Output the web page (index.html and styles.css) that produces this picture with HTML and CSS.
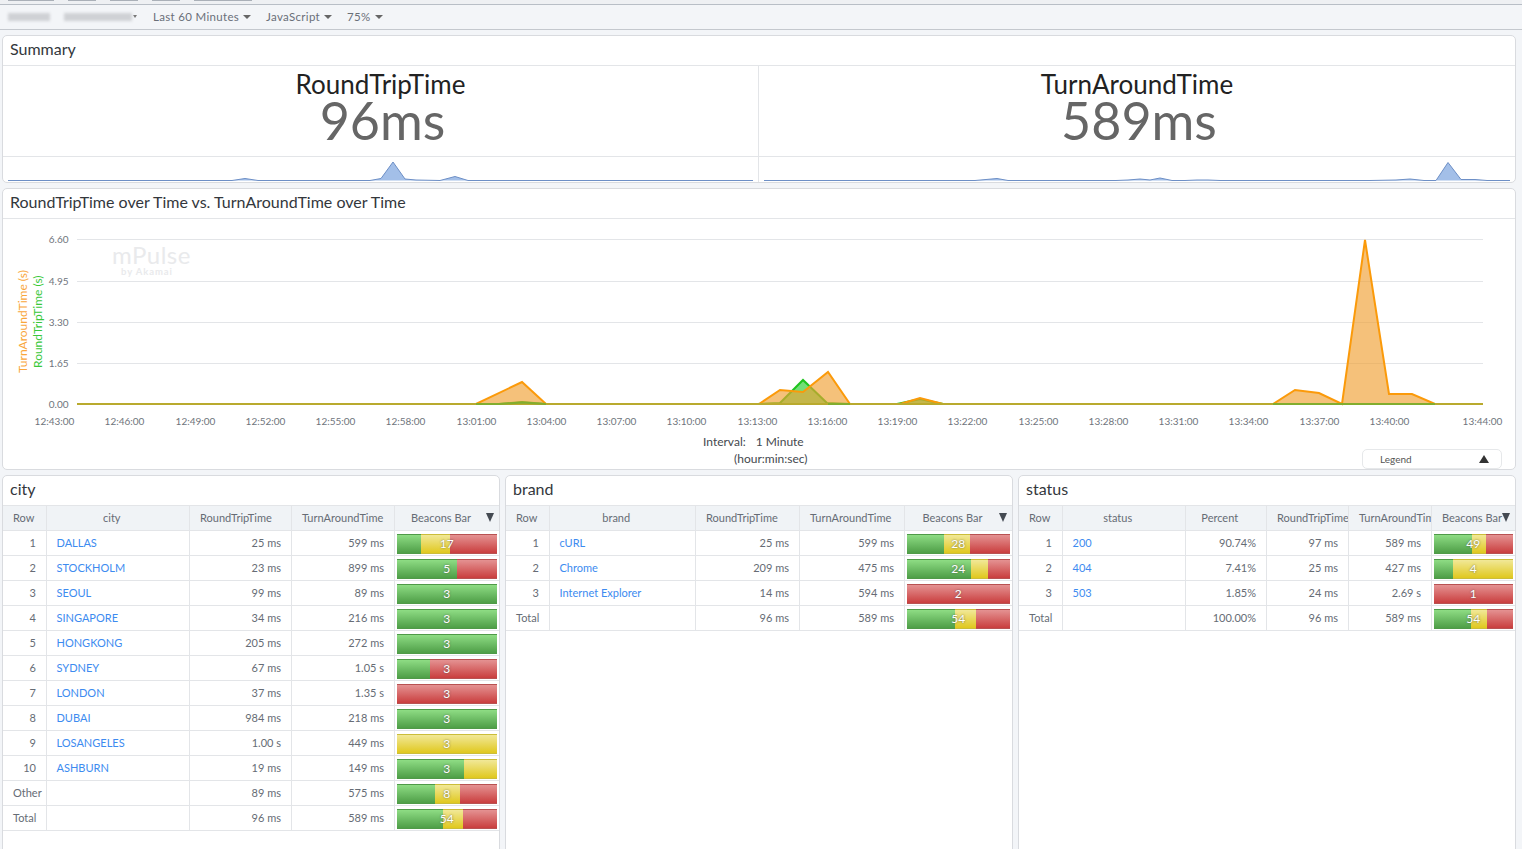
FILE: index.html
```html
<!DOCTYPE html>
<html lang="en">
<head>
    <meta charset="UTF-8">
    <meta name="viewport" content="width=device-width, initial-scale=1.0">
    <title>mPulse Dashboard</title>
    <link rel="stylesheet" href="styles.css">
</head>
<body>
    <div class="topstrip">
        <span class="tab tab-a"></span>
        <span class="tab tab-b"></span>
        <span class="tab tab-c"></span>
        <span class="tab tab-d"></span>
        <span class="tab tab-e"></span>
    </div>
    <div class="toolbar">
        <span class="blurred blurred-a"></span>
        <span class="blurred blurred-b"></span>
        <span class="caret-small"></span>
        <span class="filter filter-time">Last 60 Minutes<i class="caret"></i></span>
        <span class="filter">JavaScript<i class="caret"></i></span>
        <span class="filter">75%<i class="caret"></i></span>
    </div>

    <div class="main">
        <section class="panel summary">
            <h2 class="panel-title">Summary</h2>
            <div class="metrics">
                <div class="metric">
                    <div class="metric-text">
                        <div class="metric-name">RoundTripTime</div>
                        <div class="metric-value">96ms</div>
                    </div>
                    <svg class="spark" viewBox="3 157 755 25" width="755" height="25">
                        <polygon class="spark-fill" points="8,180.500 232,180.500 245,178.500 258,180.500 370,180.500 381,178.500 393,162 405,179 416,180 440,180.500 455,176.500 468,180.500 753,180.500"/>
                        <polyline class="spark-line" points="8,180.500 232,180.500 245,178.500 258,180.500 370,180.500 381,178.500 393,162 405,179 416,180 440,180.500 455,176.500 468,180.500 753,180.500"/>
                    </svg>
                </div>
                <div class="metric metric-right">
                    <div class="metric-text">
                        <div class="metric-name">TurnAroundTime</div>
                        <div class="metric-value">589ms</div>
                    </div>
                    <svg class="spark" viewBox="759 157 756 25" width="756" height="25">
                        <polygon class="spark-fill" points="764,180.500 975,180.500 997,178.500 1008,180.500 1116,180.500 1128,180 1140,179 1150,180 1160,178 1172,180.500 1185,180.500 1197,180 1208,180 1220,180.500 1370,180.500 1396,180 1410,179 1424,180.500 1436,180.500 1448,162.500 1461,179.500 1475,179.500 1487,180.500 1510,180.500"/>
                        <polyline class="spark-line" points="764,180.500 975,180.500 997,178.500 1008,180.500 1116,180.500 1128,180 1140,179 1150,180 1160,178 1172,180.500 1185,180.500 1197,180 1208,180 1220,180.500 1370,180.500 1396,180 1410,179 1424,180.500 1436,180.500 1448,162.500 1461,179.500 1475,179.500 1487,180.500 1510,180.500"/>
                    </svg>
                </div>
            </div>
        </section>

        <section class="panel chart-panel">
            <h2 class="panel-title">RoundTripTime over Time vs. TurnAroundTime over Time</h2>
            <div class="chart-body">
                <svg class="chart" viewBox="3 219 1512 211" width="1512" height="211">
                    <g class="grid">
                        <line x1="77" y1="239.500" x2="1483" y2="239.500"/>
                        <line x1="77" y1="281.500" x2="1483" y2="281.500"/>
                        <line x1="77" y1="322.500" x2="1483" y2="322.500"/>
                        <line x1="77" y1="363.500" x2="1483" y2="363.500"/>
                    </g>
                    <text class="mark-name" x="112" y="264">mPulse</text>
                    <text class="mark-by" x="121" y="275">by Akamai</text>

                    <g class="y-labels">
                        <text x="68.500" y="243">6.60</text>
                        <text x="68.500" y="285">4.95</text>
                        <text x="68.500" y="326">3.30</text>
                        <text x="68.500" y="367">1.65</text>
                        <text x="68.500" y="408">0.00</text>
                    </g>
                    <text class="axis-name axis-tat" transform="translate(27 373) rotate(-90)">TurnAroundTime (s)</text>
                    <text class="axis-name axis-rtt" transform="translate(42 368) rotate(-90)">RoundTripTime (s)</text>

                    <polygon class="area-rtt" points="77,404 499,404 522,402 546,404 757,404 780,403 803,380 827,403 850,404 897,404 920,399 943,404 1483,404"/>
                    <polyline class="line-rtt" points="77,404 499,404 522,402 546,404 757,404 780,403 803,380 827,403 850,404 897,404 920,399 943,404 1483,404"/>
                    <polygon class="area-tat" points="77,404 476,404 522,382 546,404 759,404 780,390 803,392 828,372 850,404 900,404 920,398 943,404 1273,404 1295,390 1319,393 1342,404 1365,240 1389,394 1412,394 1435,404 1483,404"/>
                    <polyline class="line-tat" points="77,404 476,404 522,382 546,404 759,404 780,390 803,392 828,372 850,404 900,404 920,398 943,404 1273,404 1295,390 1319,393 1342,404 1365,240 1389,394 1412,394 1435,404 1483,404"/>
                    <!-- where both series sit on zero the two lines blend -->
                    <line class="baseline" x1="77" y1="404" x2="1483" y2="404"/>
                    <polyline class="base-green" points="476,404 499,404 522,402.500 546,404"/>
                    <line class="base-green" x1="828" y1="404" x2="850" y2="404"/>
                    <line class="base-green" x1="1273" y1="404" x2="1435" y2="404"/>

                    <g class="x-labels">
                        <text x="54.500" y="425">12:43:00</text>
                        <text x="124.500" y="425">12:46:00</text>
                        <text x="195.500" y="425">12:49:00</text>
                        <text x="265.500" y="425">12:52:00</text>
                        <text x="335.500" y="425">12:55:00</text>
                        <text x="405.500" y="425">12:58:00</text>
                        <text x="476.500" y="425">13:01:00</text>
                        <text x="546.500" y="425">13:04:00</text>
                        <text x="616.500" y="425">13:07:00</text>
                        <text x="686.500" y="425">13:10:00</text>
                        <text x="757.500" y="425">13:13:00</text>
                        <text x="827.500" y="425">13:16:00</text>
                        <text x="897.500" y="425">13:19:00</text>
                        <text x="967.500" y="425">13:22:00</text>
                        <text x="1038.500" y="425">13:25:00</text>
                        <text x="1108.500" y="425">13:28:00</text>
                        <text x="1178.500" y="425">13:31:00</text>
                        <text x="1248.500" y="425">13:34:00</text>
                        <text x="1319.500" y="425">13:37:00</text>
                        <text x="1389.500" y="425">13:40:00</text>
                        <text x="1482.500" y="425">13:44:00</text>
                    </g>
                </svg>
                <div class="chart-foot">
                    <div class="interval"><span>Interval:</span><span>1 Minute</span></div>
                    <div class="interval-unit">(hour:min:sec)</div>
                </div>
                <div class="legend-toggle"><span>Legend</span><i class="tri-up"></i></div>
            </div>
        </section>

        <div class="tables">
            <section class="panel">
                <h2 class="panel-title">city</h2>
                <table class="data city-table">
                    <colgroup><col class="c-row"><col class="c-name"><col class="c-a"><col class="c-b"><col class="c-bar"></colgroup>
                    <thead><tr><th>Row</th><th>city</th><th>RoundTripTime</th><th>TurnAroundTime</th><th class="sorted">Beacons Bar<i class="tri-down"></i></th></tr></thead>
                    <tbody>
                        <tr><td class="num">1</td><td><a href="#">DALLAS</a></td><td class="num">25 ms</td><td class="num">599 ms</td><td class="barcell"><div class="bar"><i class="g" style="width:24%"></i><i class="y" style="width:29%"></i><i class="r" style="width:47%"></i><b>17</b></div></td></tr>
                        <tr><td class="num">2</td><td><a href="#">STOCKHOLM</a></td><td class="num">23 ms</td><td class="num">899 ms</td><td class="barcell"><div class="bar"><i class="g" style="width:60%"></i><i class="r" style="width:40%"></i><b>5</b></div></td></tr>
                        <tr><td class="num">3</td><td><a href="#">SEOUL</a></td><td class="num">99 ms</td><td class="num">89 ms</td><td class="barcell"><div class="bar"><i class="g" style="width:100%"></i><b>3</b></div></td></tr>
                        <tr><td class="num">4</td><td><a href="#">SINGAPORE</a></td><td class="num">34 ms</td><td class="num">216 ms</td><td class="barcell"><div class="bar"><i class="g" style="width:100%"></i><b>3</b></div></td></tr>
                        <tr><td class="num">5</td><td><a href="#">HONGKONG</a></td><td class="num">205 ms</td><td class="num">272 ms</td><td class="barcell"><div class="bar"><i class="g" style="width:100%"></i><b>3</b></div></td></tr>
                        <tr><td class="num">6</td><td><a href="#">SYDNEY</a></td><td class="num">67 ms</td><td class="num">1.05 s</td><td class="barcell"><div class="bar"><i class="g" style="width:33%"></i><i class="r" style="width:67%"></i><b>3</b></div></td></tr>
                        <tr><td class="num">7</td><td><a href="#">LONDON</a></td><td class="num">37 ms</td><td class="num">1.35 s</td><td class="barcell"><div class="bar"><i class="r" style="width:100%"></i><b>3</b></div></td></tr>
                        <tr><td class="num">8</td><td><a href="#">DUBAI</a></td><td class="num">984 ms</td><td class="num">218 ms</td><td class="barcell"><div class="bar"><i class="g" style="width:100%"></i><b>3</b></div></td></tr>
                        <tr><td class="num">9</td><td><a href="#">LOSANGELES</a></td><td class="num">1.00 s</td><td class="num">449 ms</td><td class="barcell"><div class="bar"><i class="y" style="width:100%"></i><b>3</b></div></td></tr>
                        <tr><td class="num">10</td><td><a href="#">ASHBURN</a></td><td class="num">19 ms</td><td class="num">149 ms</td><td class="barcell"><div class="bar"><i class="g" style="width:67%"></i><i class="y" style="width:33%"></i><b>3</b></div></td></tr>
                        <tr><td class="num">Other</td><td></td><td class="num">89 ms</td><td class="num">575 ms</td><td class="barcell"><div class="bar"><i class="g" style="width:38%"></i><i class="y" style="width:25%"></i><i class="r" style="width:37%"></i><b>8</b></div></td></tr>
                        <tr><td class="num">Total</td><td></td><td class="num">96 ms</td><td class="num">589 ms</td><td class="barcell"><div class="bar"><i class="g" style="width:46%"></i><i class="y" style="width:20%"></i><i class="r" style="width:34%"></i><b>54</b></div></td></tr>
                    </tbody>
                </table>
            </section>

            <section class="panel">
                <h2 class="panel-title">brand</h2>
                <table class="data brand-table">
                    <colgroup><col class="c-row"><col class="c-name"><col class="c-a"><col class="c-b"><col class="c-bar"></colgroup>
                    <thead><tr><th>Row</th><th>brand</th><th>RoundTripTime</th><th>TurnAroundTime</th><th class="sorted">Beacons Bar<i class="tri-down"></i></th></tr></thead>
                    <tbody>
                        <tr><td class="num">1</td><td><a href="#">cURL</a></td><td class="num">25 ms</td><td class="num">599 ms</td><td class="barcell"><div class="bar"><i class="g" style="width:36%"></i><i class="y" style="width:25%"></i><i class="r" style="width:39%"></i><b>28</b></div></td></tr>
                        <tr><td class="num">2</td><td><a href="#">Chrome</a></td><td class="num">209 ms</td><td class="num">475 ms</td><td class="barcell"><div class="bar"><i class="g" style="width:62%"></i><i class="y" style="width:17%"></i><i class="r" style="width:21%"></i><b>24</b></div></td></tr>
                        <tr><td class="num">3</td><td><a href="#">Internet Explorer</a></td><td class="num">14 ms</td><td class="num">594 ms</td><td class="barcell"><div class="bar"><i class="r" style="width:100%"></i><b>2</b></div></td></tr>
                        <tr><td class="num">Total</td><td></td><td class="num">96 ms</td><td class="num">589 ms</td><td class="barcell"><div class="bar"><i class="g" style="width:47%"></i><i class="y" style="width:20%"></i><i class="r" style="width:33%"></i><b>54</b></div></td></tr>
                    </tbody>
                </table>
            </section>

            <section class="panel">
                <h2 class="panel-title">status</h2>
                <table class="data status-table">
                    <colgroup><col class="c-row"><col class="c-name"><col class="c-pct"><col class="c-a"><col class="c-b"><col class="c-bar"></colgroup>
                    <thead><tr><th>Row</th><th>status</th><th>Percent</th><th>RoundTripTime</th><th>TurnAroundTime</th><th class="sorted">Beacons Bar<i class="tri-down"></i></th></tr></thead>
                    <tbody>
                        <tr><td class="num">1</td><td><a href="#">200</a></td><td class="num">90.74%</td><td class="num">97 ms</td><td class="num">589 ms</td><td class="barcell"><div class="bar"><i class="g" style="width:49%"></i><i class="y" style="width:17%"></i><i class="r" style="width:34%"></i><b>49</b></div></td></tr>
                        <tr><td class="num">2</td><td><a href="#">404</a></td><td class="num">7.41%</td><td class="num">25 ms</td><td class="num">427 ms</td><td class="barcell"><div class="bar"><i class="g" style="width:25%"></i><i class="y" style="width:75%"></i><b>4</b></div></td></tr>
                        <tr><td class="num">3</td><td><a href="#">503</a></td><td class="num">1.85%</td><td class="num">24 ms</td><td class="num">2.69 s</td><td class="barcell"><div class="bar"><i class="r" style="width:100%"></i><b>1</b></div></td></tr>
                        <tr><td class="num">Total</td><td></td><td class="num">100.00%</td><td class="num">96 ms</td><td class="num">589 ms</td><td class="barcell"><div class="bar"><i class="g" style="width:47%"></i><i class="y" style="width:20%"></i><i class="r" style="width:33%"></i><b>54</b></div></td></tr>
                    </tbody>
                </table>
            </section>
        </div>
    </div>
</body>
</html>
```

FILE: styles.css
```css
html, body {
    height: 100%;
}
body {
    display: flex;
    flex-direction: column;
    margin: 0;
    overflow: hidden;
    font-family: Lato, "Open Sans", sans-serif;
    color: #666c75;
    background-color: #f3f5f8;
}

/* top bars */
.topstrip {
    display: flex;
    flex: none;
    height: 4px;
    border-bottom: 1px solid #b8bec6;
    background-color: #eef0f3;
}
.tab {
    height: 1px;
    background-color: #aab0b8;
}
.tab-a { width: 46px; margin-left: 8px; }
.tab-b { width: 28px; margin-left: 14px; }
.tab-c { width: 28px; margin-left: 14px; }
.tab-d { width: 28px; margin-left: 14px; }
.tab-e { width: 58px; margin-left: 14px; }
.toolbar {
    display: flex;
    flex: none;
    align-items: center;
    box-sizing: border-box;
    height: 25px;
    padding-bottom: 1px;
    border-bottom: 1px solid #c4c8ce;
    font-size: 11.5px;
    letter-spacing: 0.32px;
    color: #6a6f78;
}
.blurred {
    height: 8px;
    background-color: #cfd1d5;
    filter: blur(1.5px);
}
.blurred-a { width: 42px; margin-left: 8px; }
.blurred-b { width: 68px; margin-left: 14px; }
.caret-small {
    margin-left: 1px;
    border-top: 3px solid #777;
    border-left: 2px solid transparent;
    border-right: 2px solid transparent;
}
.filter {
    display: flex;
    align-items: center;
    gap: 4px;
    margin-left: 15px;
}
.filter-time { margin-left: 16px; }
.caret {
    border-top: 4px solid #666;
    border-left: 4px solid transparent;
    border-right: 4px solid transparent;
}

/* panels */
.main {
    display: flex;
    flex: 1;
    flex-direction: column;
    gap: 5px;
    min-height: 0;
    padding: 5px 6px 0 2px;
}
.panel {
    border: 1px solid #d9dbdf;
    border-radius: 5px;
    background-color: #fff;
}
.panel-title {
    height: 29px;
    margin: 0;
    padding-left: 7px;
    border-bottom: 1px solid #e3e5e8;
    font-size: 16px;
    font-weight: 400;
    line-height: 25px;
    color: #33373c;
}

/* summary */
.metrics {
    display: grid;
    grid-template-columns: 755px 1fr;
}
.metric-right {
    border-left: 1px solid #e3e5e8;
}
.metric-text {
    height: 90px;
    border-bottom: 1px solid #e3e5e8;
    text-align: center;
    overflow: hidden;
}
.metric-name {
    margin-top: 4px;
    font-size: 26px;
    line-height: 28px;
    color: #222;
}
.metric-value {
    padding-left: 4px;
    font-size: 52px;
    line-height: 44px;
    color: #666;
}
.spark {
    display: block;
}
.spark-fill {
    fill: #a3bfe8;
}
.spark-line {
    fill: none;
    stroke: #6d8fc6;
    stroke-width: 1;
}

/* big chart */
.chart-body {
    position: relative;
    height: 250px;
}
.chart {
    display: block;
}
.grid line {
    stroke: #e3e5e8;
    stroke-width: 1;
}
.y-labels text {
    font-size: 10px;
    text-anchor: end;
    fill: #6f747c;
}
.x-labels text {
    font-size: 10px;
    text-anchor: middle;
    fill: #6f747c;
}
.axis-name {
    font-size: 12px;
}
.axis-tat {
    fill: #f9a63a;
}
.axis-rtt {
    fill: #3ac83a;
}
.mark-name {
    font-size: 24px;
    letter-spacing: 0.5px;
    fill: #e9eaec;
}
.mark-by {
    font-size: 9.500px;
    font-weight: 700;
    letter-spacing: 0.9px;
    fill: #e9eaec;
}
.area-rtt {
    fill: rgba(20, 200, 30, 0.6);
}
.line-rtt {
    fill: none;
    stroke: #1fc41f;
    stroke-width: 2;
}
.area-tat {
    fill: rgba(240, 160, 50, 0.65);
}
.line-tat {
    fill: none;
    stroke: #fb9a0a;
    stroke-width: 2;
}
.baseline {
    stroke: #b9aa2e;
    stroke-width: 2;
}
.base-green {
    fill: none;
    stroke: #82ad2e;
    stroke-width: 2;
}
.chart-foot {
    font-size: 12px;
    color: #44484e;
}
.interval {
    display: flex;
    gap: 10px;
    height: 17px;
    margin-top: 3px;
    padding-left: 700px;
    line-height: 17px;
}
.interval-unit {
    padding-left: 731px;
    line-height: 17px;
}
.legend-toggle {
    position: absolute;
    right: 13px;
    bottom: 0;
    display: flex;
    align-items: center;
    justify-content: space-between;
    box-sizing: border-box;
    width: 140px;
    height: 20px;
    padding: 0 12px 0 17px;
    border: 1px solid #e6e8ea;
    border-radius: 5px;
    font-size: 10px;
    color: #555;
}
.tri-up {
    border-bottom: 8px solid #333;
    border-left: 5px solid transparent;
    border-right: 5px solid transparent;
}

/* tables */
.tables {
    display: grid;
    flex: 1;
    grid-template-columns: 498px 508px 498px;
    gap: 5px;
    min-height: 0;
    margin-bottom: -12px;
}
.data {
    width: 100%;
    table-layout: fixed;
    border-collapse: collapse;
    font-size: 11px;
}
.data th {
    position: relative;
    height: 22px;
    padding: 0 22px 2px 10.5px;
    border: 1px solid #e3e5e8;
    border-top: none;
    font-weight: 400;
    white-space: nowrap;
    overflow: hidden;
    color: #666c75;
    background-color: #f0f3f6;
}
.data td {
    height: 22px;
    padding: 0 10px 2px;
    border: 1px solid #e3e5e8;
    white-space: nowrap;
}
.data th:first-child,
.data td:first-child {
    border-left: none;
}
.data th:first-child {
    padding-left: 10px;
}
.data th:last-child,
.data td:last-child {
    border-right: none;
}
.data .num {
    padding-right: 9.5px;
    text-align: right;
}
.data a {
    color: #3d8bf0;
    text-decoration: none;
}
.data .barcell {
    padding: 2px 2px 0;
}
.tri-down {
    position: absolute;
    top: 7px;
    right: 5px;
    border-top: 9px solid #444a52;
    border-left: 4px solid transparent;
    border-right: 4px solid transparent;
}

.city-table .c-row { width: 43px; }
.city-table .c-name { width: 143px; }
.city-table .c-a { width: 102px; }
.city-table .c-b { width: 103px; }
.brand-table .c-row { width: 43px; }
.brand-table .c-name { width: 146px; }
.brand-table .c-a { width: 104px; }
.brand-table .c-b { width: 105px; }
.status-table .c-row { width: 43px; }
.status-table .c-name { width: 123px; }
.status-table .c-pct { width: 81px; }
.status-table .c-a { width: 82px; }
.status-table .c-b { width: 83px; }

/* beacon bars */
.bar {
    position: relative;
    display: flex;
    height: 20px;
    font-size: 12px;
}
.bar i {
    display: block;
    box-sizing: border-box;
    height: 100%;
    border: 1px solid transparent;
    border-left: none;
    border-right: none;
}
.bar .g {
    border-color: #4f9a48;
    background: linear-gradient(#8edc84, #4e9e47);
}
.bar .y {
    border-color: #cbbd3a;
    background: linear-gradient(#f1e898, #e0c81e);
}
.bar .r {
    border-color: #b85252;
    background: linear-gradient(#e49292, #c93e3e);
}
.bar b {
    position: absolute;
    inset: 0;
    font-weight: 400;
    line-height: 20px;
    text-align: center;
    color: #fff;
    text-shadow: 0 0 2px rgba(70, 70, 70, 0.8);
}
```
